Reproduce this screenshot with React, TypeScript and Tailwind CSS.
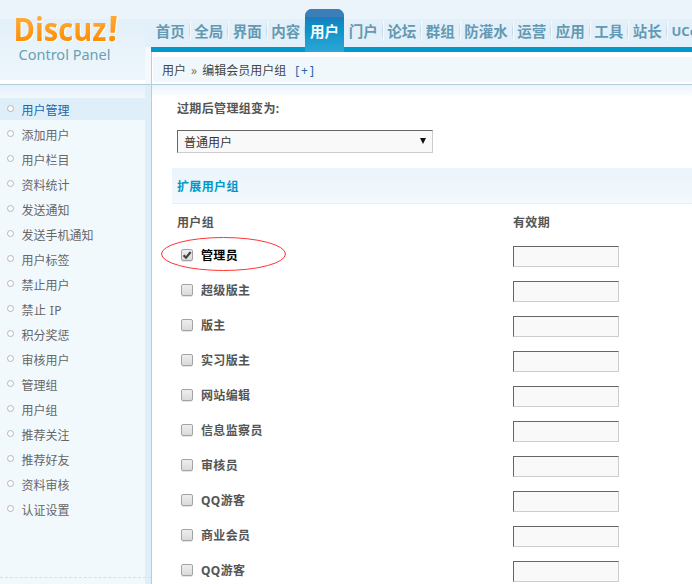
const navItems = [
  "首页",
  "全局",
  "界面",
  "内容",
  "用户",
  "门户",
  "论坛",
  "群组",
  "防灌水",
  "运营",
  "应用",
  "工具",
  "站长",
  "UCenter",
];

const menuItems = [
  "用户管理",
  "添加用户",
  "用户栏目",
  "资料统计",
  "发送通知",
  "发送手机通知",
  "用户标签",
  "禁止用户",
  "禁止 IP",
  "积分奖惩",
  "审核用户",
  "管理组",
  "用户组",
  "推荐关注",
  "推荐好友",
  "资料审核",
  "认证设置",
];

const groups = [
  { name: "管理员", checked: true },
  { name: "超级版主" },
  { name: "版主" },
  { name: "实习版主" },
  { name: "网站编辑" },
  { name: "信息监察员" },
  { name: "审核员" },
  { name: "QQ游客" },
  { name: "商业会员" },
  { name: "QQ游客" },
];

function Logo() {
  return (
    <svg width="145" height="61" className="block overflow-visible" aria-label="Discuz! Control Panel">
      <defs>
        <linearGradient id="orange" x1="0" y1="0" x2="0" y2="1">
          <stop offset="0.25" stopColor="#ffaa35" />
          <stop offset="0.85" stopColor="#ff8b00" />
        </linearGradient>
      </defs>
      <g
        className="drop-shadow-[1px_1px_0_#fff]"
        fill="url(#orange)"
        fontFamily="'Open Sans', 'Noto Sans', sans-serif"
        fontWeight="700"
      >
        <text x="13.5" y="22" fontSize="32" textLength="93" lengthAdjust="spacingAndGlyphs">
          Discuz
        </text>
        <text x="108.5" y="22" fontSize="35" transform="skewX(-4)">
          !
        </text>
      </g>
      <text
        x="18.5"
        y="41"
        fill="#6ba0b5"
        fontSize="14.5"
        fontFamily="'Noto Sans', 'Open Sans', sans-serif"
        textLength="92"
        lengthAdjust="spacingAndGlyphs"
      >
        Control Panel
      </text>
    </svg>
  );
}

function NavItem({ label }: { label: string }) {
  if (label === "用户") {
    return (
      <li className="relative z-10 mt-[9px] h-[43px] w-[39px] shrink-0 overflow-hidden rounded-t-[7px] bg-linear-to-b from-[#1d6fae] via-[#0995cc] to-[#2ca6d5] pt-[13px] text-center text-white">
        <div className="absolute inset-x-0 top-0 h-2 bg-[#3c7fb8]" />
        {label}
      </li>
    );
  }
  return (
    <li
      className={
        "relative h-[47px] shrink-0 pt-[22px] text-center " +
        (label === "防灌水"
          ? "w-[53px]"
          : label === "UCenter"
            ? "w-[70px] pl-[5px] text-left text-[13px]"
            : "w-[38.5px]")
      }
    >
      {label}
      <span className="absolute right-0 top-[21px] h-5 w-px bg-linear-to-b from-[#e3f0f9] via-[#bfd9e6] to-[#e3f0f9] shadow-[1px_0_0_#f3f9fd]" />
    </li>
  );
}

function Checkbox({ checked }: { checked?: boolean }) {
  return (
    <span className="mb-px block size-3 shrink-0 rounded-[2px] border border-[#a3a3a3] bg-linear-to-b from-[#eeeeee] to-[#dadada] shadow-[0_1px_0_#e5e5e5]">
      {checked && (
        <svg viewBox="0 0 10 10" className="block size-[10px]">
          <path d="M1.6 5.2 4 7.7 8.7 2" fill="none" stroke="#444" strokeWidth="2.2" />
        </svg>
      )}
    </span>
  );
}

export default function App() {
  return (
    <div className="flex h-[584px] w-[692px] flex-col overflow-hidden bg-white font-['Noto_Sans','Noto_Sans_CJK_SC',sans-serif] text-xs text-[#555]">
      <header className="flex h-[85px] shrink-0 border-b border-[#b3cfd9] bg-white">
        <div className="w-[145px] shrink-0">
          <div className="h-[19px] bg-[#ecf4fb]" />
          <div className="h-[61px] bg-linear-to-b from-[#e3f0f9] to-[#eef6fc]">
            <Logo />
          </div>
        </div>
        <div className="w-[6px] shrink-0">
          <div className="h-[19px] bg-[#ecf4fb]" />
          <div className="h-7 bg-[#e3f0f9]" />
          <div className="h-[37px] bg-[#f5f9fd]" />
        </div>
        <div className="min-w-0 flex-1">
          <div className="h-[52px] border-b-[5px] border-[#0099cc] bg-linear-to-b from-[#ecf4fb] from-[19px] to-[#e3f0f9] to-[19px]">
            <ul className="flex text-[14.5px] font-bold leading-[18px] text-[#6499b3]">
              {navItems.map((label) => (
                <NavItem key={label} label={label} />
              ))}
            </ul>
          </div>
          <div className="h-8 border-l border-[#b3cfd9] pb-[2px] pl-px pt-[5px]">
            <div className="flex h-[25px] items-center bg-[#f1f8fc] pl-[9px] pt-[2px] leading-none text-[#444]">
              <span>用户</span>
              <span className="mx-[5px] text-[#777]">»</span>
              <span>编辑会员用户组</span>
              <a href="#" className="ml-[9px] tracking-[2px] text-[#2366a8]">
                [+]
              </a>
            </div>
          </div>
        </div>
      </header>

      <div className="flex min-h-0 flex-1">
        <aside className="w-[152px] shrink-0 border-r border-[#b3cfd9] bg-[#deeffa]">
          <div className="flex h-full w-[145px] flex-col bg-[#f2f9fd]">
            <div className="h-[13px] shrink-0 bg-linear-to-b from-[#e4f0fa] to-[#f2f9fd]" />
            <ul>
              {menuItems.map((item, i) => (
                <li
                  key={item}
                  className={
                    "mb-[3px] flex h-[22px] items-center pl-[7px] leading-none " +
                    (i === 0 ? "bg-[#deeffa] text-[#2366a8]" : "text-[#666]")
                  }
                >
                  <span className="mb-px mr-[7.5px] size-[7px] rounded-full border border-[#b5b5b5] bg-white" />
                  <span className={"pt-[4px] " + (item === "禁止 IP" ? "tracking-[0.4px]" : "")}>{item}</span>
                </li>
              ))}
            </ul>
            <div className="mb-[6px] mt-auto w-[151px] border-t border-dashed border-[#d5dfe5]" />
          </div>
        </aside>

        <main className="min-w-0 flex-1">
          <div className="h-[13px] bg-linear-to-b from-[#eaf4fb] to-white" />
          <div className="pl-5">
            <h3 className="ml-[5px] h-[32px] pt-[4px] font-bold leading-[14px] tracking-[0.35px]">
              过期后管理组变为:
            </h3>
            <div className="ml-[5px] flex h-[23px] w-[256px] items-center justify-between border border-b-[#ccc] border-l-[#666] border-r-[#ccc] border-t-[#666] bg-[#f9f9f9] pl-[6px] pr-[6px] text-[#333]">
              <span className="pt-[3px] leading-none">普通用户</span>
              <svg width="6" height="6" className="mb-px" viewBox="0 0 6 6">
                <path d="M0 0h6L3 6z" fill="#111" />
              </svg>
            </div>
            <h3 className="mt-[15px] h-9 border-b border-dotted border-[#deeffa] bg-linear-to-b from-[#ebf4fc] to-[#f3f9fd] pl-[5px] pt-[12px] font-bold leading-[14px] tracking-[0.35px] text-[#0099cc]">
              扩展用户组
            </h3>
            <div className="flex h-[34px] items-center pl-[5px] pt-[3px] font-bold leading-none tracking-[0.35px]">
              <span className="w-[336px]">用户组</span>
              <span>有效期</span>
            </div>
            {groups.map(({ name, checked }, i) => (
              <div key={i} className="relative flex h-[35px] items-center pl-[9px]">
                <Checkbox checked={checked} />
                <span
                  className={
                    "ml-2 w-[312px] font-bold leading-none tracking-[0.35px] " + (checked ? "text-black" : "")
                  }
                >
                  {name}
                </span>
                <span className="mt-[2px] h-[21px] w-[106px] border border-b-[#ccc] border-l-[#666] border-r-[#ccc] border-t-[#666] bg-[#f9f9f9]" />
                {checked && (
                  <svg width="126" height="35" className="absolute -left-[11px] -top-px">
                    <ellipse cx="62.5" cy="17" rx="62" ry="16.5" fill="none" stroke="#f33" />
                  </svg>
                )}
              </div>
            ))}
          </div>
        </main>
      </div>
    </div>
  );
}
